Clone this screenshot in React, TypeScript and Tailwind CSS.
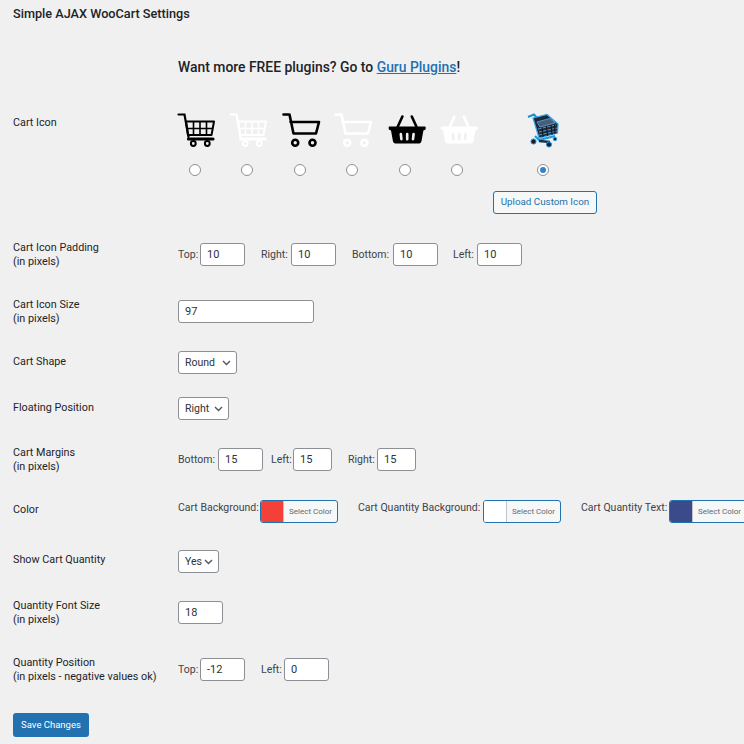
const font = { fontFamily: 'Roboto, "Open Sans", sans-serif' };

function Row({ label, sub, className, labelClass = "", children }: { label: string; sub?: string; className: string; labelClass?: string; children: React.ReactNode }) {
  return (
    <div className={`flex items-center ${className}`}>
      <div className={`w-[165px] shrink-0 text-[10.8px] leading-[13.5px] text-[#1d2327] ${labelClass}`}>
        <div>{label}</div>
        {sub && <div>{sub}</div>}
      </div>
      {children}
    </div>
  );
}

function Field({ value, className = "w-[45px]" }: { value: string; className?: string }) {
  return (
    <input
      readOnly
      value={value}
      className={`${className} h-[23px] shrink-0 rounded-[3px] border border-[#8c8f94] bg-white px-[6px] text-[11px] text-[#2c3338] outline-none`}
    />
  );
}

function Caption({ children, className = "" }: { children: React.ReactNode; className?: string }) {
  return <span className={`shrink-0 whitespace-nowrap text-[10.5px] text-[#3c434a] ${className}`}>{children}</span>;
}

function Dropdown({ value, className }: { value: string; className: string }) {
  return (
    <div className={`${className} flex h-[23px] items-center justify-between rounded-[3px] border border-[#8c8f94] bg-white pl-[6px] pr-[5px] text-[10.5px] text-[#2c3338]`}>
      <span>{value}</span>
      <svg width="9" height="6" viewBox="0 0 9 6" fill="none" stroke="#50575e" strokeWidth="1.4">
        <path d="M1 1l3.5 3.5L8 1" />
      </svg>
    </div>
  );
}

function Radio({ checked = false }: { checked?: boolean }) {
  return (
    <div className="flex h-[12px] w-[12px] items-center justify-center rounded-full border border-[#8c8f94] bg-white">
      {checked && <div className="h-[6px] w-[6px] rounded-full bg-[#3582c4]" />}
    </div>
  );
}

function WireCart({ color }: { color: string }) {
  return (
    <svg width="34" height="38" viewBox="0 0 34 38" className="overflow-visible" fill="none" stroke={color}>
      <path d="M0.5 2.5H6.5L10.5 25" strokeWidth="2.2" strokeLinecap="round" />
      <path d="M8 9.5H36L33.5 23H10Z" strokeWidth="2" strokeLinejoin="round" />
      <path d="M15.5 9.5V23M22 9.5V23M28.5 9.5V23M9 16.5H35" strokeWidth="1.6" />
      <path d="M10.5 27H35" strokeWidth="3.2" strokeLinecap="round" />
      <circle cx="15.3" cy="31.5" r="2.4" strokeWidth="2" />
      <circle cx="29.3" cy="31.5" r="2.4" strokeWidth="2" />
    </svg>
  );
}

function PlainCart({ color }: { color: string }) {
  return (
    <svg width="34" height="38" viewBox="0 0 34 38" className="overflow-visible" fill="none" stroke={color}>
      <path d="M0.5 2.5H6.5L10.5 21.5H33L36 10H7.5" strokeWidth="2.6" strokeLinecap="round" strokeLinejoin="round" />
      <circle cx="12.2" cy="30.7" r="3" strokeWidth="2.6" />
      <circle cx="29.5" cy="30.7" r="3" strokeWidth="2.6" />
    </svg>
  );
}

function Basket({ color }: { color: string }) {
  return (
    <svg width="34" height="38" viewBox="0 0 34 38" className="overflow-visible">
      <path d="M14.4 4.5L9.6 15M23.8 4.5L28.6 15" stroke={color} strokeWidth="2.6" strokeLinecap="round" />
      <path d="M1 14.6H37.2Q38 14.6 37.6 17.6L35.4 18.6L33.4 29.6Q33 31.4 31.5 31.4H7Q5.4 31.4 5 29.6L3 18.6L0.8 17.6Q0.4 14.6 1 14.6Z" fill={color} />
      <path d="M12.8 22L13.4 27.2M19.2 22V27.2M25.6 22L25 27.2" stroke="#f0f0f1" strokeWidth="2.6" strokeLinecap="round" />
    </svg>
  );
}

function CustomCart() {
  return (
    <svg width="34" height="36" viewBox="0 0 34 36" className="mr-[3px]">
      <path d="M2 5L8 2.5L11 6" fill="none" stroke="#1f8fd0" strokeWidth="2" />
      <path d="M7 6L21 2.5L32 12L31.5 21L13 26Z" fill="#1c2c40" stroke="#35a8e8" strokeWidth="1.2" />
      <path d="M11 10L24 6.5L29 11L14 15ZM12 17L30 13M13 20L31 16M13 23L31 19" fill="#41607f" stroke="#6f97bd" strokeWidth="0.9" />
      <path d="M16 15L17 25M20.5 14L21.5 24M25 13L26 23M28.5 12.5L29 22" stroke="#0f1c2c" strokeWidth="1.2" fill="none" />
      <path d="M9 24L13 28L29 24" fill="none" stroke="#1d9ae0" strokeWidth="2.2" />
      <path d="M13 29L24 30" stroke="#16324c" strokeWidth="2.4" />
      <circle cx="7.5" cy="29.5" r="2.6" fill="#10202f" stroke="#2aa0e4" />
      <circle cx="23" cy="32.5" r="2.6" fill="#10202f" stroke="#2aa0e4" />
      <circle cx="29" cy="27" r="1.8" fill="#10202f" stroke="#2aa0e4" />
    </svg>
  );
}

function ColorPicker({ color }: { color: string }) {
  return (
    <div className="flex h-[23px] w-[78px] shrink-0 overflow-hidden rounded-[3px] border border-[#2271b1] bg-[#f6f7f7]">
      <div className="w-[23px] border-r border-[#c3c4c7]" style={{ backgroundColor: color }} />
      <div className="flex flex-1 items-center justify-center text-[8px] text-[#646970]">Select Color</div>
    </div>
  );
}

function IconChoice({ children }: { children: React.ReactNode }) {
  return (
    <div className="flex w-[34px] flex-col items-center">
      <div className="h-[38px] w-[34px]">{children}</div>
      <div className="mt-[14px]">
        <Radio />
      </div>
    </div>
  );
}

export default function App() {
  return (
    <div style={font} className="h-[744px] w-[744px] overflow-hidden bg-[#f0f0f1] pl-[13px]">
      <h1 className="flex h-[28px] items-center text-[12.7px] font-medium text-[#1d2327]">Simple AJAX WooCart Settings</h1>

      <div className="mt-[28px] flex h-[22px] items-center pl-[165px] text-[13.9px] font-medium text-[#1d2327]">
        <span>
          Want more FREE plugins? Go to <a className="text-[#2271b1] underline">Guru Plugins</a>!
        </span>
      </div>

      <div className="mt-[34px] flex h-[102px]">
        <div className="mt-[4px] w-[165px] shrink-0 text-[10.8px] leading-[13.5px] text-[#1d2327]">Cart Icon</div>
        <div className="flex gap-[18.4px]">
          <IconChoice><WireCart color="#000000" /></IconChoice>
          <IconChoice><WireCart color="#ffffff" /></IconChoice>
          <IconChoice><PlainCart color="#000000" /></IconChoice>
          <IconChoice><PlainCart color="#ffffff" /></IconChoice>
          <IconChoice><Basket color="#000000" /></IconChoice>
          <IconChoice><Basket color="#ffffff" /></IconChoice>
          <div className="ml-[0.6px] flex w-[104px] flex-col items-center">
            <div className="h-[38px]"><CustomCart /></div>
            <div className="mr-[3px] mt-[14px]">
              <Radio checked />
            </div>
            <button className="mt-[15px] h-[23px] w-[104px] rounded-[3px] border border-[#2271b1] bg-[#f6f7f7] text-[9.8px] text-[#2271b1]">
              Upload Custom Icon
            </button>
          </div>
        </div>
      </div>

      <Row className="mt-[29px] h-[23px]" label="Cart Icon Padding" sub="(in pixels)">
        <div className="flex items-center">
          <Caption className="w-[22px]">Top:</Caption>
          <Field value="10" />
          <Caption className="ml-[16px] w-[30px]">Right:</Caption>
          <Field value="10" />
          <Caption className="ml-[16px] w-[41px]">Bottom:</Caption>
          <Field value="10" />
          <Caption className="ml-[15px] w-[24px]">Left:</Caption>
          <Field value="10" />
        </div>
      </Row>

      <Row className="mt-[34px] h-[23px]" label="Cart Icon Size" sub="(in pixels)">
        <Field value="97" className="w-[136px]" />
      </Row>

      <Row className="mt-[28px] h-[23px]" labelClass="mb-[1px]" label="Cart Shape">
        <Dropdown value="Round" className="w-[59px]" />
      </Row>

      <Row className="mt-[23px] h-[23px]" labelClass="mb-[1px]" label="Floating Position">
        <Dropdown value="Right" className="w-[51px]" />
      </Row>

      <Row className="mt-[28px] h-[23px]" label="Cart Margins" sub="(in pixels)">
        <div className="flex items-center">
          <Caption className="w-[40px]">Bottom:</Caption>
          <Field value="15" />
          <Caption className="ml-[8px] w-[22px]">Left:</Caption>
          <Field value="15" className="w-[39px]" />
          <Caption className="ml-[16px] w-[29px]">Right:</Caption>
          <Field value="15" className="w-[39px]" />
        </div>
      </Row>

      <Row className="mt-[29px] h-[23px]" labelClass="mb-[3px]" label="Color">
        <div className="flex items-start">
          <Caption className="w-[82px]">Cart Background:</Caption>
          <ColorPicker color="#f44138" />
          <Caption className="ml-[20px] w-[125px]">Cart Quantity Background:</Caption>
          <ColorPicker color="#ffffff" />
          <Caption className="ml-[20px] w-[88px]">Cart Quantity Text:</Caption>
          <ColorPicker color="#3b4a8a" />
        </div>
      </Row>

      <Row className="mt-[27px] h-[23px]" labelClass="mb-[3px]" label="Show Cart Quantity">
        <Dropdown value="Yes" className="w-[41px]" />
      </Row>

      <Row className="mt-[28px] h-[23px]" label="Quantity Font Size" sub="(in pixels)">
        <Field value="18" />
      </Row>

      <Row className="mt-[34px] h-[23px]" label="Quantity Position" sub="(in pixels - negative values ok)">
        <div className="flex items-center">
          <Caption className="w-[22px]">Top:</Caption>
          <Field value="-12" />
          <Caption className="ml-[16px] w-[23px]">Left:</Caption>
          <Field value="0" />
        </div>
      </Row>

      <button className="mt-[32px] h-[24px] w-[76px] rounded-[3px] bg-[#2271b1] text-[9.5px] text-white">Save Changes</button>
    </div>
  );
}
